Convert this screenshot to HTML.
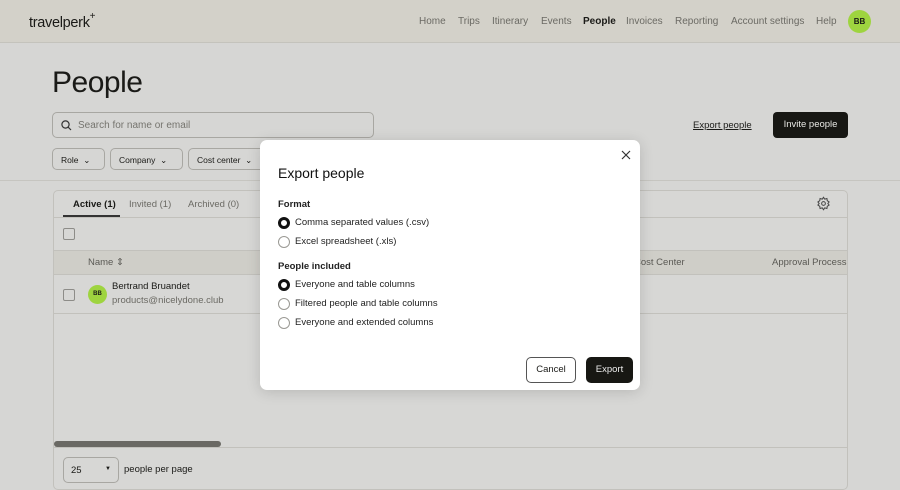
<!DOCTYPE html>
<html><head><meta charset="utf-8"><style>
*{box-sizing:border-box;margin:0;padding:0}
body{width:900px;height:484px;overflow:hidden;background:#d6d6d4;font-family:"Liberation Sans",sans-serif;color:#1a1a17;position:relative}
.hdr{position:absolute;left:0;top:0;width:900px;height:43px;background:#d3d1c9;border-bottom:1px solid #c4c3bc}
.logo{position:absolute;left:29px;top:13px;font-size:14.5px;letter-spacing:-0.3px;color:#1a1a17}
.logo sup{font-size:10px;position:relative;top:-2px}
.nav{position:absolute;top:16px;font-size:10px;color:#6b6a64;white-space:nowrap}
.av{position:absolute;left:848px;top:10px;width:23px;height:23px;border-radius:50%;background:#9ed43f;font-size:8px;font-weight:bold;text-align:center;line-height:23px}
h1{position:absolute;left:52px;top:66px;font-size:30px;font-weight:normal;letter-spacing:-0.5px}
.search{position:absolute;left:52px;top:112px;width:322px;height:26px;border:1px solid #a8a7a2;border-radius:5px;font-size:10px;color:#75746e;padding:7px 0 0 25px}
.f{position:absolute;top:148px;height:22px;border:1px solid #a8a7a2;border-radius:5px;font-size:8.5px;padding:6px 0 0 8px}
.exl{position:absolute;left:693px;top:120px;font-size:9.5px;text-decoration:underline}
.inv{position:absolute;left:773px;top:112px;width:75px;height:26px;background:#171713;color:#e8e8e4;border-radius:4px;font-size:9.5px;text-align:center;line-height:26px}
.line180{position:absolute;left:0;top:180px;width:900px;height:1px;background:#c6c5c0}
.card{position:absolute;left:53px;top:190px;width:795px;height:300px;border:1px solid #c2c1bc;border-radius:5px;background:#d7d7d5}
.t{position:absolute;font-size:9.5px}
.cb{position:absolute;width:12px;height:12px;border:1px solid #8d8c88;border-radius:2px}
.modal{position:absolute;left:260px;top:140px;width:380px;height:250px;background:#fff;border-radius:7px;box-shadow:0 2px 14px rgba(0,0,0,.15)}
.m{position:absolute;font-size:9.5px;color:#222}
.r{position:absolute;left:18px;width:12px;height:12px;border-radius:50%;border:1px solid #9a9994}
.r.on{border:3.5px solid #111}
</style></head><body>
<div class="hdr">
<div class="logo">travelperk<sup>+</sup></div>
<span class="nav" style="left:419px">Home</span>
<span class="nav" style="left:458px">Trips</span>
<span class="nav" style="left:492px">Itinerary</span>
<span class="nav" style="left:541px">Events</span>
<span class="nav" style="left:583px;color:#1a1a17;font-weight:bold">People</span>
<span class="nav" style="left:626px">Invoices</span>
<span class="nav" style="left:675px">Reporting</span>
<span class="nav" style="left:731px">Account settings</span>
<span class="nav" style="left:816px">Help</span>
<div class="av">BB</div>
</div>
<h1>People</h1>
<div class="search"><svg style="position:absolute;left:8px;top:7px" width="11" height="11" viewBox="0 0 11 11"><circle cx="4.5" cy="4.5" r="3.6" fill="none" stroke="#333" stroke-width="1.2"/><path d="M7.2 7.2L10 10" stroke="#333" stroke-width="1.2"/></svg>Search for name or email</div>
<div class="f" style="left:52px;width:53px">Role &nbsp;⌄</div>
<div class="f" style="left:110px;width:73px">Company &nbsp;⌄</div>
<div class="f" style="left:188px;width:80px">Cost center &nbsp;⌄</div>
<div class="exl">Export people</div>
<div class="inv">Invite people</div>
<div class="line180"></div>
<div class="card">
<div class="t" style="left:19px;top:8px;font-weight:bold">Active (1)</div>
<div style="position:absolute;left:9px;top:24px;width:57px;height:2px;background:#333"></div>
<div class="t" style="left:75px;top:8px;color:#6b6a64">Invited (1)</div>
<div class="t" style="left:134px;top:8px;color:#6b6a64">Archived (0)</div>
<div style="position:absolute;left:0;top:26px;width:793px;height:1px;background:#c2c1bc"></div>
<svg style="position:absolute;left:762px;top:5px" width="15" height="15" viewBox="0 0 24 24"><circle cx="12" cy="12" r="3" fill="none" stroke="#444" stroke-width="1.6"/><path d="M12 2l2 3 3.5-1 .5 3.5 3 2-2 2.5 2 2.5-3 2-.5 3.5-3.5-1-2 3-2-3-3.5 1-.5-3.5-3-2 2-2.5-2-2.5 3-2 .5-3.5 3.5 1z" fill="none" stroke="#444" stroke-width="1.6"/></svg>
<div class="cb" style="left:9px;top:37px"></div>
<div style="position:absolute;left:0;top:59px;width:793px;height:25px;background:#cfcec8;border-top:1px solid #c2c1bc;border-bottom:1px solid #c2c1bc"></div>
<div class="t" style="left:34px;top:66px;color:#5a5954">Name ⇕</div>
<div class="t" style="left:580px;top:66px;color:#5a5954">Cost Center</div>
<div class="t" style="left:718px;top:66px;color:#5a5954">Approval Process</div>
<div class="cb" style="left:9px;top:98px"></div>
<div style="position:absolute;left:34px;top:94px;width:19px;height:19px;border-radius:50%;background:#9ed43f;font-size:6px;font-weight:bold;text-align:center;line-height:19px">BB</div>
<div class="t" style="left:58px;top:90px">Bertrand Bruandet</div>
<div class="t" style="left:58px;top:104px;color:#6b6a64">products@nicelydone.club</div>
<div style="position:absolute;left:0;top:122px;width:793px;height:1px;background:#c2c1bc"></div>
<div style="position:absolute;left:0;top:250px;width:167px;height:6px;border-radius:3px;background:#6a6964"></div>
<div style="position:absolute;left:0;top:256px;width:793px;height:1px;background:#c2c1bc"></div>
<div style="position:absolute;left:9px;top:266px;width:56px;height:26px;border:1px solid #a8a7a2;border-radius:5px;font-size:9.5px;padding:7px 0 0 7px">25<span style="position:absolute;left:41px;top:8px;font-size:6px">▼</span></div>
<div class="t" style="left:70px;top:273px">people per page</div>
</div>
<div class="modal">
<div class="m" style="left:18px;top:25px;font-size:14px;color:#111">Export people</div>
<svg style="position:absolute;left:361px;top:10px" width="10" height="10" viewBox="0 0 10 10"><path d="M1 1L9 9M9 1L1 9" stroke="#333" stroke-width="1.2"/></svg>
<div class="m" style="left:18px;top:59px;font-weight:bold">Format</div>
<div class="r on" style="top:77px"></div><div class="m" style="left:35px;top:77px">Comma separated values (.csv)</div>
<div class="r" style="top:96px"></div><div class="m" style="left:35px;top:96px">Excel spreadsheet (.xls)</div>
<div class="m" style="left:18px;top:121px;font-weight:bold">People included</div>
<div class="r on" style="top:139px"></div><div class="m" style="left:35px;top:139px">Everyone and table columns</div>
<div class="r" style="top:158px"></div><div class="m" style="left:35px;top:158px">Filtered people and table columns</div>
<div class="r" style="top:177px"></div><div class="m" style="left:35px;top:177px">Everyone and extended columns</div>
<div style="position:absolute;left:266px;top:217px;width:50px;height:26px;border:1px solid #555;border-radius:5px;font-size:9.5px;text-align:center;line-height:24px">Cancel</div>
<div style="position:absolute;left:326px;top:217px;width:47px;height:26px;background:#171713;color:#eee;border-radius:5px;font-size:9.5px;text-align:center;line-height:26px">Export</div>
</div>
</body></html>
